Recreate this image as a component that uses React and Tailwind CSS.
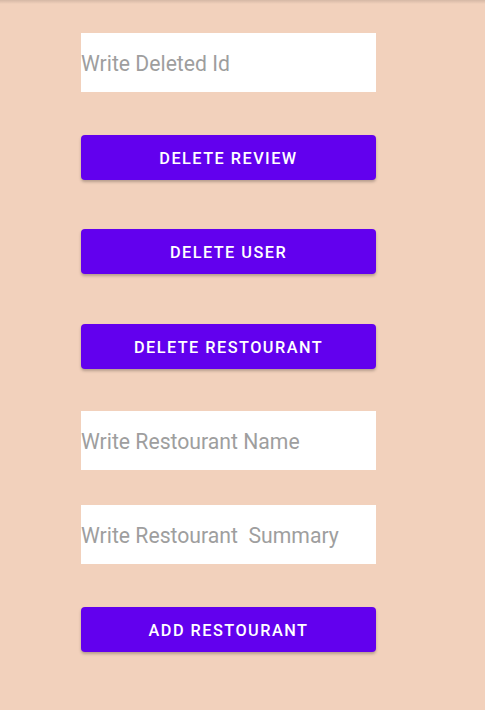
export default function App() {
  const inputCls =
    "w-[295px] h-[59px] bg-white flex items-center pt-[2px] text-[21.2px] text-[#9e9e9e] font-normal leading-none";
  const btnCls =
    "w-[295px] h-[45px] bg-[#6200ee] rounded-[4px] shadow-[0_2px_3px_rgba(0,0,0,0.25)] flex items-center justify-center pt-[3px] text-white font-medium text-[16.3px] tracking-[0.09em] leading-none";
  return (
    <div
      className="w-[485px] h-[710px] bg-[#f2d1bc] relative overflow-hidden"
      style={{ fontFamily: "Roboto, 'Liberation Sans', sans-serif" }}
    >
      <div className="absolute top-0 left-0 right-0 h-[4px] bg-gradient-to-b from-[rgba(0,0,0,0.12)] to-transparent" />
      <div className="flex flex-col pl-[81px] pt-[33px]">
        <div className={inputCls}>Write Deleted Id</div>
        <div className={btnCls + " mt-[43px]"}>DELETE REVIEW</div>
        <div className={btnCls + " mt-[49px]"}>DELETE USER</div>
        <div className={btnCls + " mt-[50px]"}>DELETE RESTOURANT</div>
        <div className={inputCls + " mt-[42px]"}>Write Restourant Name</div>
        <div className={inputCls + " mt-[35px]"}>Write Restourant&nbsp; Summary</div>
        <div className={btnCls + " mt-[43px]"}>ADD RESTOURANT</div>
      </div>
    </div>
  );
}
